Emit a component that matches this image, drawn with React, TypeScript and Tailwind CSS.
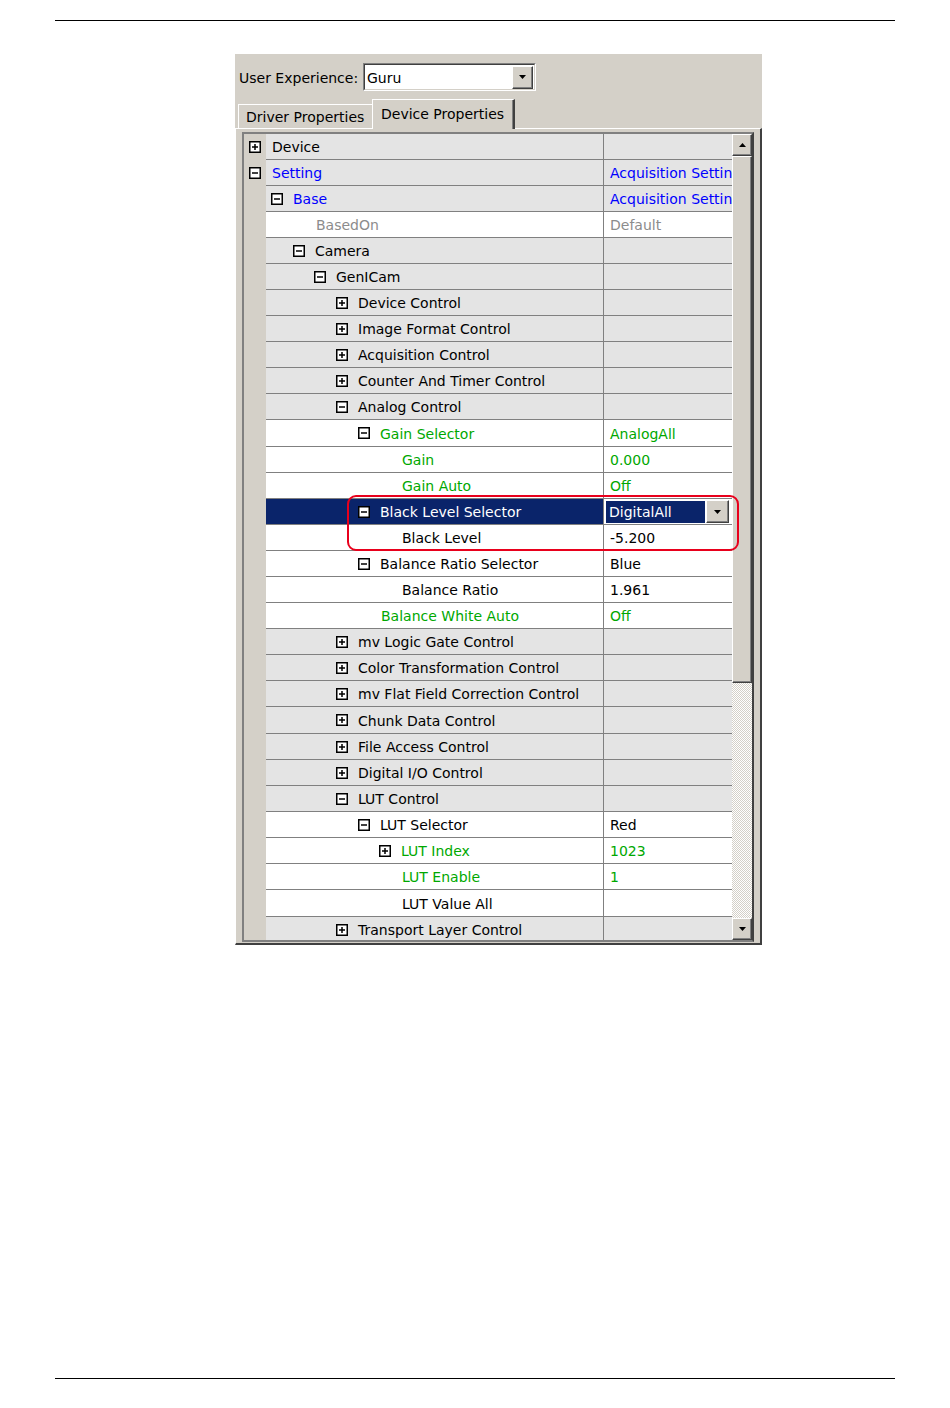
import React from 'react';

type Row = {
  l: string;
  d: number;
  b?: '+' | '-';
  g?: boolean;
  c?: 'blue' | 'green' | 'gray';
  v?: string;
  t?: boolean;
  sel?: boolean;
};

const ROWS: Row[] = [
  { l: 'Device', d: 0, b: '+', g: true },
  { l: 'Setting', d: 0, b: '-', g: true, c: 'blue', v: 'Acquisition Setting' },
  { l: 'Base', d: 1, b: '-', g: true, c: 'blue', v: 'Acquisition Setting' },
  { l: 'BasedOn', d: 2, c: 'gray', v: 'Default' },
  { l: 'Camera', d: 2, b: '-', g: true },
  { l: 'GenICam', d: 3, b: '-', g: true },
  { l: 'Device Control', d: 4, b: '+', g: true },
  { l: 'Image Format Control', d: 4, b: '+', g: true },
  { l: 'Acquisition Control', d: 4, b: '+', g: true },
  { l: 'Counter And Timer Control', d: 4, b: '+', g: true },
  { l: 'Analog Control', d: 4, b: '-', g: true },
  { l: 'Gain Selector', d: 5, b: '-', c: 'green', v: 'AnalogAll', t: true },
  { l: 'Gain', d: 6, c: 'green', v: '0.000' },
  { l: 'Gain Auto', d: 6, c: 'green', v: 'Off' },
  { l: 'Black Level Selector', d: 5, b: '-', sel: true, v: 'DigitalAll' },
  { l: 'Black Level', d: 6, v: '-5.200' },
  { l: 'Balance Ratio Selector', d: 5, b: '-', v: 'Blue' },
  { l: 'Balance Ratio', d: 6, v: '1.961' },
  { l: 'Balance White Auto', d: 5, c: 'green', v: 'Off' },
  { l: 'mv Logic Gate Control', d: 4, b: '+', g: true },
  { l: 'Color Transformation Control', d: 4, b: '+', g: true },
  { l: 'mv Flat Field Correction Control', d: 4, b: '+', g: true },
  { l: 'Chunk Data Control', d: 4, b: '+', g: true, t: true },
  { l: 'File Access Control', d: 4, b: '+', g: true },
  { l: 'Digital I/O Control', d: 4, b: '+', g: true },
  { l: 'LUT Control', d: 4, b: '-', g: true },
  { l: 'LUT Selector', d: 5, b: '-', v: 'Red' },
  { l: 'LUT Index', d: 6, b: '+', c: 'green', v: '1023' },
  { l: 'LUT Enable', d: 6, c: 'green', v: '1' },
  { l: 'LUT Value All', d: 6, t: true },
  { l: 'Transport Layer Control', d: 4, b: '+', g: true },
];

const BOX_PAD: Record<number, string> = {
  1: 'pl-[5px]',
  2: 'pl-[27px]',
  3: 'pl-[48px]',
  4: 'pl-[70px]',
  5: 'pl-[92px]',
  6: 'pl-[113px]',
};

const TEXT_PAD: Record<number, string> = {
  0: 'pl-[6px]',
  1: 'pl-[28px]',
  2: 'pl-[50px]',
  3: 'pl-[72px]',
  4: 'pl-[93px]',
  5: 'pl-[115px]',
  6: 'pl-[136px]',
};

const COLOR: Record<string, string> = {
  blue: 'text-[#0000ff]',
  green: 'text-[#00a800]',
  gray: 'text-[#8c8c8c]',
};

function Box({ plus }: { plus: boolean }) {
  return (
    <svg width="12" height="12" viewBox="0 0 12 12" className="shrink-0 block">
      <rect x="0.75" y="0.75" width="10.5" height="10.5" fill="white" stroke="black" strokeWidth="1.5" />
      <path d={plus ? 'M3 6H9M6 3V9' : 'M3 6H9'} stroke="black" strokeWidth="1.5" fill="none" />
    </svg>
  );
}

function Arrow({ up }: { up?: boolean }) {
  return (
    <svg width="7" height="4" viewBox="0 0 7 4" className="block">
      <polygon points={up ? '0,4 7,4 3.5,0' : '0,0 7,0 3.5,4'} fill="black" />
    </svg>
  );
}

function RaisedBtn({ className, children }: { className: string; children?: React.ReactNode }) {
  return (
    <div
      className={`${className} bg-[#d4d0c8] border border-t-white border-l-white border-r-[#404040] border-b-[#404040] shadow-[inset_-1px_-1px_0_#808080] flex items-center justify-center shrink-0`}
    >
      {children}
    </div>
  );
}

function GridRow({ r }: { r: Row }) {
  const rowBg = r.g ? 'bg-[#e4e4e4]' : 'bg-white';
  const nameBg = r.sel ? 'bg-[#0a246a]' : rowBg;
  const nameColor = r.sel ? 'text-white' : r.c ? COLOR[r.c] : 'text-black';
  const valColor = r.c ? COLOR[r.c] : 'text-black';
  return (
    <div className={`flex shrink-0 ${r.t ? 'h-[27px]' : 'h-[26px]'}`}>
      <div className="w-[22px] shrink-0 bg-[#d4d0c8] flex items-center pl-[5px]">
        {r.d === 0 && r.b ? <Box plus={r.b === '+'} /> : null}
      </div>
      <div className={`flex w-[466px] shrink-0 border-b border-[#808080] ${rowBg}`}>
        <div
          className={`w-[337px] shrink-0 flex items-center whitespace-nowrap overflow-hidden ${nameBg} ${nameColor} ${
            r.d > 0 && r.b ? BOX_PAD[r.d] : TEXT_PAD[r.d]
          }`}
        >
          {r.d > 0 && r.b ? (
            <>
              <Box plus={r.b === '+'} />
              <span className="ml-[10px] pt-[2px]">{r.l}</span>
            </>
          ) : (
            <span className="pt-[2px]">{r.l}</span>
          )}
        </div>
        <div
          className={`w-[129px] shrink-0 border-l border-[#808080] flex items-center whitespace-nowrap overflow-hidden ${
            r.sel ? 'bg-white pl-[2px] pr-[3px] gap-[1px]' : 'pl-[6px]'
          } ${valColor}`}
        >
          {r.sel ? (
            <>
              <div className="w-[99px] h-[22px] bg-[#0a246a] text-white flex items-center pl-[3px] pt-[2px]">{r.v}</div>
              <RaisedBtn className="w-[23px] h-[23px]">
                <Arrow />
              </RaisedBtn>
            </>
          ) : (
            <span className="pt-[2px]">{r.v ?? ''}</span>
          )}
        </div>
      </div>
    </div>
  );
}

export default function App() {
  return (
    <div className="relative w-[950px] h-[1408px] bg-white font-['DejaVu_Sans',sans-serif] text-[14px] text-black overflow-hidden">
      <div className="pt-[20px]">
        <div className="mx-[55px] h-px bg-black" />
      </div>

      <div className="ml-[235px] mt-[33px] w-[527px] h-[891px] bg-[#d4d0c8] flex flex-col">
        {/* User experience */}
        <div className="flex items-center h-[28px] mt-[9px] pl-[4px] shrink-0">
          <div className="w-[124px] whitespace-nowrap pt-[2px]">User Experience:</div>
          <div className="w-[173px] h-[28px] border border-t-[#808080] border-l-[#808080] border-r-white border-b-white">
            <div className="h-full border border-t-[#404040] border-l-[#404040] border-r-[#d4d0c8] border-b-[#d4d0c8] bg-white flex items-center">
              <span className="flex-1 pl-[2px] pt-[2px]">Guru</span>
              <RaisedBtn className="w-[21px] h-[23px] mr-[1px]">
                <Arrow />
              </RaisedBtn>
            </div>
          </div>
        </div>

        {/* Tabs */}
        <div className="flex items-end h-[29px] mt-[8px] pl-[3px] shrink-0">
          <div className="w-[134px] h-[24px] border-t border-l border-white flex items-center pl-[7px] pt-[2px] whitespace-nowrap">
            Driver Properties
          </div>
          <div className="relative z-10 -mb-px w-[143px] h-[30px] bg-[#d4d0c8] border-t border-l border-white border-r-2 border-r-[#404040] shadow-[inset_-1px_0_0_#808080] flex items-center pl-[8px] whitespace-nowrap">
            Device Properties
          </div>
        </div>

        {/* Tab page */}
        <div className="flex-1 flex flex-col border-t border-l border-t-white border-l-white border-r-2 border-b-2 border-r-[#404040] border-b-[#404040] pt-[3px] pl-[6px] pr-[5px] pb-[1px] min-h-0">
          <div className="flex-1 flex border-2 border-t-[#808080] border-l-[#808080] border-r-[#404040] border-b-[#808080] shadow-[inset_1px_1px_0_#404040] min-h-0 w-[512px]">
            <div className="flex flex-col overflow-hidden w-[488px] min-h-0">
              {ROWS.map((r, i) => (
                <GridRow key={i} r={r} />
              ))}
            </div>
            {/* Scrollbar */}
            <div className="w-[20px] flex flex-col shrink-0">
              <RaisedBtn className="w-[20px] h-[22px]">
                <Arrow up />
              </RaisedBtn>
              <RaisedBtn className="w-[20px] h-[527px]" />
              <div className="flex-1 bg-[repeating-conic-gradient(#d4d0c8_0%_25%,#ffffff_0%_50%)] bg-[length:2px_2px]" />
              <RaisedBtn className="w-[20px] h-[22px]">
                <Arrow />
              </RaisedBtn>
            </div>
          </div>
        </div>
      </div>

      <div className="mt-[433px] mx-[55px] h-px bg-black" />

      {/* Red highlight annotation */}
      <div className="absolute left-[347px] top-[495px] w-[392px] h-[56px] border-[2.5px] border-[#e8001c] rounded-[9px]" />
    </div>
  );
}
